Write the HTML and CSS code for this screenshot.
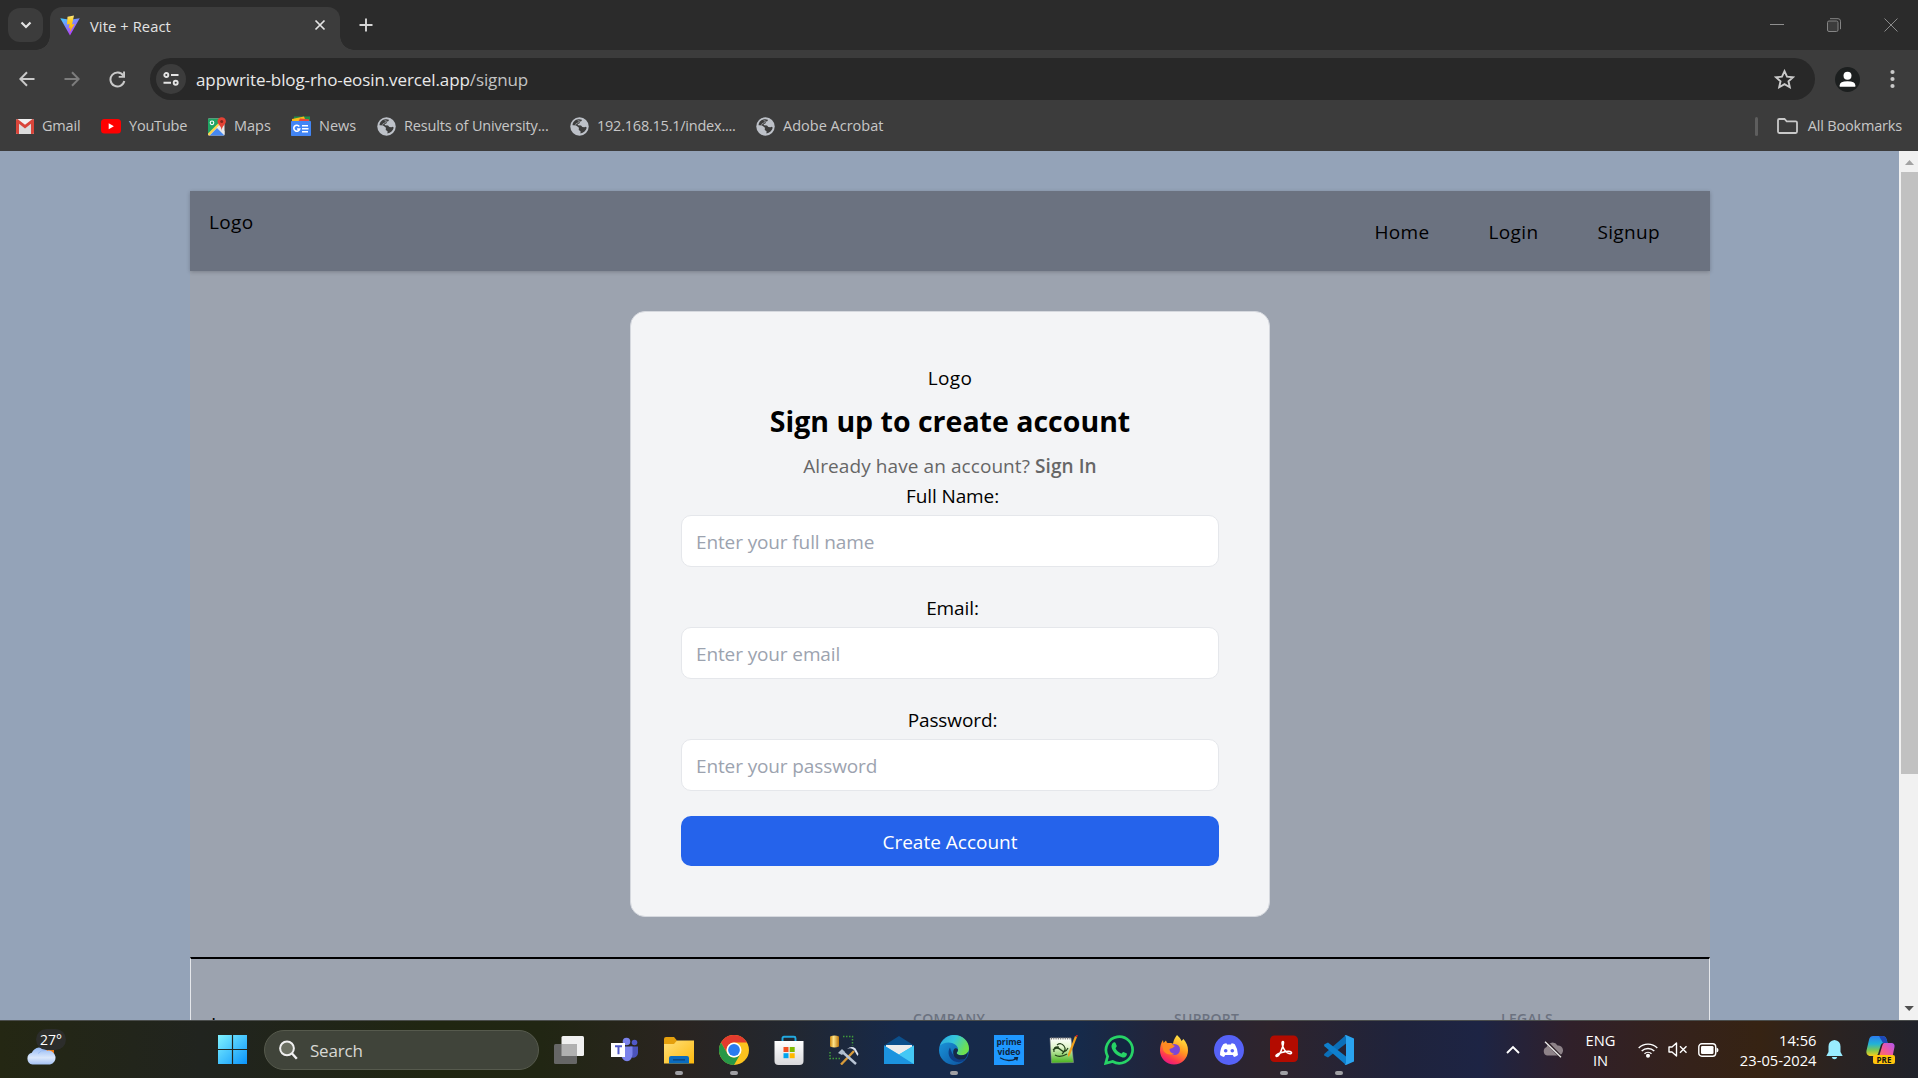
FILE: index.html
```html
<!DOCTYPE html>
<html lang="en">
<head>
<meta charset="utf-8">
<title>Vite + React</title>
<link rel="stylesheet" href="styles.css">
</head>
<body>
<svg class="defs" width="0" height="0" aria-hidden="true">
  <defs>
    <symbol id="globe" viewBox="0 0 20 20">
      <circle cx="10" cy="10" r="9.7" fill="#bdc1c8"/>
      <path d="M7.600 2.600c1.600-.5 3.400-.4 4.900.2l-.3 1.500-1.900.7-.2 1.700-2.100.9.400 1.200 3.200.2 1.400 1.400 2.100.4 1.600-.6.900 1c-.7 2.900-3.200 5.600-6.600 6.100l.1-2.300-1.900-1.300.2-2.300-2.500-2.100-4.200-.4c-.200-2.900 2-5.500 4.900-6.300z" fill="#3c3c3c"/>
      <path d="M8 3.800l2 .3-1.100 1.800-2.600 1.200-.6 2-3.700-.2" fill="none" stroke="#bdc1c8" stroke-width=".6"/>
    </symbol>
    <linearGradient id="win" x1="0" y1="0" x2="1" y2="1"><stop offset="0" stop-color="#80f4ff"/><stop offset="1" stop-color="#0a93fb"/></linearGradient>
    <linearGradient id="cloud" x1="0" y1="0" x2="0" y2="1"><stop offset="0" stop-color="#93b9f5"/><stop offset=".6" stop-color="#dbe8fb"/><stop offset="1" stop-color="#a4c1f3"/></linearGradient>
    <linearGradient id="vite" x1="0" y1="0" x2=".6" y2="1"><stop offset="0" stop-color="#41d1ff"/><stop offset="1" stop-color="#bd34fe"/></linearGradient>
    <linearGradient id="bolt" x1="0" y1="0" x2="0" y2="1"><stop offset="0" stop-color="#ffea83"/><stop offset=".3" stop-color="#ffcd20"/><stop offset="1" stop-color="#ffa800"/></linearGradient>
    <linearGradient id="folder" x1="0" y1="0" x2="1" y2="1"><stop offset="0" stop-color="#ffe07a"/><stop offset="1" stop-color="#fdb90d"/></linearGradient>
    <linearGradient id="store" x1="0" y1="0" x2="0" y2="1"><stop offset="0" stop-color="#fff"/><stop offset="1" stop-color="#d9d9dc"/></linearGradient>
    <linearGradient id="gold"><stop offset="0" stop-color="#c9850c"/><stop offset=".4" stop-color="#ffe58a"/><stop offset="1" stop-color="#b87208"/></linearGradient>
    <linearGradient id="edgeTop" x1="0" y1="0" x2="1" y2=".4"><stop offset="0" stop-color="#2aa6dd"/><stop offset=".5" stop-color="#35c6dc"/><stop offset="1" stop-color="#6ee04f"/></linearGradient>
    <linearGradient id="edgeLow" x1="0" y1="0" x2="1" y2="1"><stop offset="0" stop-color="#1b9de2"/><stop offset="1" stop-color="#0c4c98"/></linearGradient>
    <linearGradient id="fox" x1=".8" y1="0" x2=".3" y2="1"><stop offset="0" stop-color="#fff04a"/><stop offset=".45" stop-color="#ff9a1f"/><stop offset=".8" stop-color="#ff3750"/><stop offset="1" stop-color="#e31587"/></linearGradient>
    <linearGradient id="grass" x1="0" y1="0" x2="0" y2="1"><stop offset="0" stop-color="#fff"/><stop offset=".35" stop-color="#e4f6cf"/><stop offset="1" stop-color="#47b31c"/></linearGradient>
    <linearGradient id="cpA" x1="0" y1="0" x2="0" y2="1"><stop offset="0" stop-color="#2b7cf0"/><stop offset=".4" stop-color="#21b3d6"/><stop offset=".7" stop-color="#7cc653"/><stop offset="1" stop-color="#f5cf1b"/></linearGradient>
    <linearGradient id="cpB" x1="0" y1="1" x2="1" y2="0"><stop offset="0" stop-color="#ff7a45"/><stop offset=".5" stop-color="#f0589f"/><stop offset="1" stop-color="#b057f0"/></linearGradient>
  </defs>
</svg>

<header class="browser">
  <div class="tabstrip">
    <button class="tab-search" aria-label="Search tabs"><svg width="12" height="8" viewBox="0 0 12 8"><path d="M1.500 1.500L6 6l4.500-4.500" fill="none" stroke="#e3e3e3" stroke-width="2.200"/></svg></button>
    <div class="tab">
      <svg width="20" height="21" viewBox="0 0 20 21"><path d="M.3 3.200L10 20.500 19.700 3.200 10 4.800z" fill="url(#vite)"/><path d="M14 .5L7.500 1.800 7 9.600l2.600-.5-.9 4.100 1.900-.6-1 4.900 5-8.600-2.600.5z" fill="url(#bolt)"/></svg>
      <span class="tab-title">Vite + React</span>
      <svg class="tab-close" width="12" height="12" viewBox="0 0 12 12"><path d="M1.500 1.500l9 9m0-9l-9 9" stroke="#e3e3e3" stroke-width="1.700"/></svg>
    </div>
    <svg class="new-tab" width="14" height="14" viewBox="0 0 14 14"><path d="M7 .5v13M.5 7h13" stroke="#d6d6d6" stroke-width="1.900"/></svg>
    <div class="window-controls">
      <svg width="14" height="14" viewBox="0 0 14 14"><path d="M0 6.500h14" stroke="#8f8f8f"/></svg>
      <svg width="14" height="14" viewBox="0 0 14 14" fill="none" stroke="#858585"><rect x=".5" y="3" width="10.500" height="10.500" rx="1.500" fill="#3c3c3c"/><path d="M3 .7h8q2.500 0 2.500 2.500v8"/></svg>
      <svg width="14" height="14" viewBox="0 0 14 14"><path d="M.5.5l13 13m0-13l-13 13" stroke="#8a8a8a"/></svg>
    </div>
  </div>

  <div class="toolbar">
    <svg class="nav-icon" width="16" height="16" viewBox="0 0 16 16"><path d="M15.500 8H1.500M8 1.200L1.300 8 8 14.800" fill="none" stroke="#c9c9c9" stroke-width="2"/></svg>
    <svg class="nav-icon" width="16" height="16" viewBox="0 0 16 16"><path d="M.5 8h14M8 1.200L14.700 8 8 14.800" fill="none" stroke="#7c7c7c" stroke-width="2"/></svg>
    <svg class="nav-icon" width="17" height="17" viewBox="0 0 17 17"><path d="M14.300 4.600A7 7 0 1 0 15.300 10" fill="none" stroke="#c9c9c9" stroke-width="2"/><path d="M16 .5v6.300H9.700V5h4.400V.5z" fill="#c9c9c9"/></svg>
    <div class="omnibox">
      <span class="site-info"><svg width="16" height="14" viewBox="0 0 16 14" fill="none" stroke="#e3e3e3" stroke-width="1.900"><circle cx="3.300" cy="3" r="2"/><path d="M8 3h7.500M.5 10.800H8"/><circle cx="12.700" cy="10.800" r="2"/></svg></span>
      <span class="url">appwrite-blog-rho-eosin.vercel.app<span class="path">/signup</span></span>
      <svg class="star" width="21" height="20" viewBox="0 0 21 20"><path d="M10.500 2.200l2.500 5.500 6 .6-4.500 4 1.300 5.900-5.300-3.100-5.300 3.100 1.300-5.900L2 8.300l6-.6z" fill="none" stroke="#c9c9c9" stroke-width="1.900"/></svg>
    </div>
    <svg class="avatar" width="25" height="25" viewBox="0 0 25 25"><circle cx="12.500" cy="12.500" r="12.500" fill="#1c1f1f"/><circle cx="12.500" cy="8.800" r="4" fill="#fff"/><path d="M4.700 19.800v-1.600q0-4 7.800-4t7.800 4v1.600z" fill="#fff"/></svg>
    <svg class="menu" width="5" height="20" viewBox="0 0 5 20" fill="#c9c9c9"><circle cx="2.500" cy="3" r="2.100"/><circle cx="2.500" cy="10" r="2.100"/><circle cx="2.500" cy="17" r="2.100"/></svg>
  </div>

  <nav class="bookmarks">
    <a class="bm bm-gmail"><svg width="18" height="15" viewBox="0 0 18 15"><path d="M0 1.500Q0 0 1.500 0h15Q18 0 18 1.500v12Q18 15 16.500 15h-15Q0 15 0 13.500z" fill="#f1f1f1"/><path d="M3 4l6 5 6-5v11H3z" fill="#dcdcdc"/><path d="M0 1.500Q0 0 1.500 0L9 5.800 16.500 0Q18 0 18 1.500v12q0 1.500-1.500 1.500H15V4.800L9 9.600 3 4.800V15H1.500Q0 15 0 13.500z" fill="#d9453a"/></svg><span>Gmail</span></a>
    <a class="bm bm-youtube"><svg width="20" height="15" viewBox="0 0 20 15"><rect width="20" height="14.500" rx="3.500" fill="#f00"/><path d="M7.700 4.300v6l5.200-3z" fill="#fff"/></svg><span>YouTube</span></a>
    <a class="bm bm-maps"><svg width="18" height="19" viewBox="0 0 18 19"><rect y="1.500" width="16.500" height="17" rx="1" fill="#e8e8e8"/><path d="M0 2.500q0-1 1-1h10.500L10 7.500 0 17.500z" fill="#1fa463"/><path d="M1.500 18.500l7.500-7.500 7.500 7.500z" fill="#4688f1"/><path d="M0 16.500L10 6.500l1.500 1.500L1.500 18.500Q0 18.500 0 16.500z" fill="#fbd44c"/><path d="M9 10.500l2-2 5.500 5.500v4z" fill="#e8e8e8"/><circle cx="4" cy="5.800" r="1.800" fill="none" stroke="#fff" stroke-width="1.100"/><path d="M13.700.2A4.200 4.200 0 0 0 9.500 4.500c0 3 4.200 4.500 4.200 9.500 0-5 4.200-6.500 4.200-9.500A4.200 4.200 0 0 0 13.700.2z" fill="#e34234"/><circle cx="13.700" cy="4.500" r="1.500" fill="#84261d"/></svg><span>Maps</span></a>
    <a class="bm bm-news"><svg width="20" height="20" viewBox="0 0 20 20"><path d="M3 .5h16V6H3z" fill="#1e8e4a"/><path d="M1 3L13 .5 15 6H1z" fill="#f9bb16"/><path d="M9 2.500l9 .8V6H7z" fill="#e8453c"/><rect y="5" width="20" height="15" rx=".8" fill="#4285f4"/><path d="M8.300 10.500a3 3 0 1 0 .4 2.500H6" fill="none" stroke="#fff" stroke-width="1.600"/><path d="M11 9.700h6M11 12.700h6.500M11 15.700h6" stroke="#fff" stroke-width="1.500"/></svg><span>News</span></a>
    <a class="bm bm-univ"><svg width="19" height="19"><use href="#globe"/></svg><span>Results of University...</span></a>
    <a class="bm bm-router"><svg width="19" height="19"><use href="#globe"/></svg><span>192.168.15.1/index....</span></a>
    <a class="bm bm-adobe"><svg width="19" height="19"><use href="#globe"/></svg><span>Adobe Acrobat</span></a>
    <a class="bm bm-all"><svg width="21" height="16" viewBox="0 0 21 16"><path d="M1 13.500V2.300Q1 1 2.300 1H7.500l2.200 2.300h9Q20 3.300 20 4.600v8.900q0 1.500-1.300 1.500H2.300Q1 15 1 13.500z" fill="none" stroke="#c9c9c9" stroke-width="1.800"/></svg><span>All Bookmarks</span></a>
  </nav>
</header>

<div class="viewport">
  <div class="page">
    <div class="container">
      <div class="site-header">
        <span>Logo</span>
        <nav class="site-nav"><a>Home</a><a>Login</a><a>Signup</a></nav>
      </div>
      <main class="main">
        <form class="card">
          <div class="card-logo">Logo</div>
          <h2 class="card-title">Sign up to create account</h2>
          <p class="card-sub">Already have an account? <a>Sign In</a></p>
          <label>Full Name:</label>
          <div class="field">Enter your full name</div>
          <label>Email:</label>
          <div class="field">Enter your email</div>
          <label>Password:</label>
          <div class="field">Enter your password</div>
          <button type="button" class="submit">Create Account</button>
        </form>
      </main>
      <footer class="site-footer">
        <div class="foot-logo">Logo</div>
        <div>COMPANY</div>
        <div>SUPPORT</div>
        <div>LEGALS</div>
      </footer>
    </div>
  </div>
  <div class="scrollbar">
    <svg width="19" height="21" viewBox="0 0 19 21"><path d="M6 14l4.500-5 4.500 5z" fill="#a3a3a3"/></svg>
    <div class="thumb"></div>
    <svg width="19" height="23" viewBox="0 0 19 23"><path d="M5.500 9l4.700 5 4.700-5z" fill="#505050"/></svg>
  </div>
</div>

<div class="taskbar">
  <div class="weather">
    <svg width="30" height="22" viewBox="0 0 30 22"><path d="M20 4h8v5h-8z" fill="#e8720c"/><path d="M6.500 20.500A6 6 0 0 1 5.800 8.800 9 9 0 0 1 21 6.800a6.900 6.900 0 0 1 3 13.700z" fill="url(#cloud)"/><path d="M12 9.500q3-4 8-3" fill="none" stroke="#9bbcf3" stroke-width="1"/></svg>
    <span class="temp">27°</span>
  </div>
  <svg class="start" width="29" height="29" viewBox="0 0 29 29"><path d="M0 0h13.900v13.900H0zM15.100 0H29v13.900H15.100zM0 15.100h13.900V29H0zM15.100 15.100H29V29H15.100z" fill="url(#win)"/></svg>
  <div class="search"><svg width="19" height="20" viewBox="0 0 19 20"><circle cx="8" cy="8.300" r="6.900" fill="#6b6f62" stroke="#f0f0f0" stroke-width="2"/><path d="M12.800 13.300l5 5.400" stroke="#f0f0f0" stroke-width="2.400"/></svg><span>Search</span></div>

  <div class="apps">
    <span><svg width="30" height="30" viewBox="0 0 30 30"><rect x="7.500" y="1" width="22.500" height="20" rx="1.500" fill="#f0f0f0"/><rect y="9" width="23" height="20" rx="1.500" fill="#666"/><path d="M7.500 9H23v12H7.500z" fill="#b0b0b0"/></svg></span>
    <span><svg width="30" height="30" viewBox="0 0 30 30"><circle cx="25.500" cy="7.500" r="2.800" fill="#5059c9"/><path d="M21 11.500h8v6.500a4.800 4.800 0 0 1-6 4.500z" fill="#4b53bc"/><circle cx="17.500" cy="6.500" r="3.800" fill="#7b83eb"/><path d="M12 11.500h11.500v8q-.6 6.500-5.500 6.700-5-.2-6-6.700z" fill="#7b83eb"/><rect x="2" y="8" width="14" height="14" fill="#fff"/><path d="M6 11.200h7M9.500 11.200v8" stroke="#5059c9" stroke-width="2"/></svg></span>
    <span class="open"><svg width="30" height="30" viewBox="0 0 30 30"><path d="M0 4q0-2 2-2h8l3 3.500h0v5H0z" fill="#e5a00d"/><path d="M0 9h10l3-3.500h17V28.500H0z" fill="url(#folder)"/><path d="M5 28.500V23q0-2 2-2h16q2 0 2 2v5.500z" fill="#0a6cc0"/><path d="M9 24.800h12" stroke="#0b4a86" stroke-width="1.600"/></svg></span>
    <span class="open"><svg width="30" height="30" viewBox="0 0 30 30"><circle cx="15" cy="15" r="15" fill="#fcc31e"/><path d="M2 7.500A15 15 0 0 1 28 7.500H15A7.500 7.500 0 0 0 8.500 18.700z" fill="#e33b2e"/><path d="M2 7.500A15 15 0 0 0 15 30L21.500 18.800A7.500 7.500 0 0 1 8.500 18.800z" fill="#279847"/><circle cx="15" cy="15" r="7.500" fill="#fff"/><circle cx="15" cy="15" r="5.900" fill="#2a7bf0"/></svg></span>
    <span><svg width="30" height="30" viewBox="0 0 30 30"><path d="M8.500 6V3.200Q8.500 1.800 10 1.800h10q1.500 0 1.500 1.400V6" fill="none" stroke="#22a9e0" stroke-width="1.900"/><path d="M.5 6h29v20q0 4-4 4H4.500q-4 0-4-4z" fill="url(#store)"/><path d="M9.500 12h5v5h-5z" fill="#f25022"/><path d="M15.700 12h5v5h-5z" fill="#7fba00"/><path d="M9.500 18.200h5v5h-5z" fill="#00a4ef"/><path d="M15.700 18.200h5v5h-5z" fill="#ffb900"/></svg></span>
    <span><svg width="30" height="30" viewBox="0 0 30 30"><path d="M1 1.500q4.500-2 9 0v10q-4.500 2-9 0z" fill="url(#gold)"/><path d="M14 1.500h9.500v9M1 17v6.500h10" fill="none" stroke="#3f9a3a" stroke-width="1.500" stroke-dasharray="1.500 1.500"/><path d="M12 29.500L25 16" stroke="#d79a3a" stroke-width="2.400"/><path d="M13 16.500l14 12.500" stroke="#b8c4d4" stroke-width="2.500"/><path d="M18 14q4-2 7 1l3.500 6 1-2-3-5.500q-4-3-8.500.5z" fill="#dbe3ee"/><path d="M9 18l4-4 3 3-3 3z" fill="#aebccd"/></svg></span>
    <span><svg width="30" height="30" viewBox="0 0 30 30"><path d="M0 10.500L15 1l15 9.500v6H0z" fill="#0b4f8c"/><path d="M2 10h26v12H2z" fill="#ececec"/><path d="M0 10.500l15 9 15-9V29H0z" fill="#34b8ee"/><path d="M0 29V10.500L30 29z" fill="#1c93df"/><path d="M15 19.500L30 10.500V29z" fill="#44c8f5"/></svg></span>
    <span class="open"><svg width="30" height="30" viewBox="0 0 30 30"><circle cx="15" cy="15" r="15" fill="url(#edgeLow)"/><path d="M1 10.500C4 2.500 11 0 15 0c8.500 0 15 6 15 13.500 0 4-3.200 6.700-7.300 6.700-3.700 0-5-1.300-5-2.200 0-.8 1.300-1.300 1.300-3.600C19 10.500 14.500 7.500 9.500 7.500 5.500 7.500 2.500 9 1 10.500z" fill="url(#edgeTop)"/><path d="M11 12.500c-3 4.500-1.500 13 7 14.500 3.500.6 7-1 8.500-2.800-6 1.200-13-1.200-15.500-11.700z" fill="#0f3f86"/><path d="M19 14.400c0 2.300-1.300 2.800-1.300 3.600 0 .9 1.300 2.200 5 2.200 3 0 5.400-1.400 6.500-3.700q-.6 4.500-3 7.200c-4.500 2.200-12.500.5-12-7 .2-2.800 2.300-5 4.800-2.300z" fill="#162a48"/></svg></span>
    <span><span class="prime"><span>prime</span><span>video</span><svg width="20" height="5" viewBox="0 0 20 5"><path d="M1 .8q8 5 16.500.8M15 .8l3.500-.3-.8 3" fill="none" stroke="#10243c" stroke-width="1.300"/></svg></span></span>
    <span><svg width="30" height="30" viewBox="0 0 30 30"><path d="M1 3h21l2.500 24.500L2.500 28z" fill="url(#grass)" stroke="#999" stroke-width=".5"/><path d="M2 3.500h20" stroke="#777" stroke-width="2" stroke-dasharray="1 1.300"/><path d="M4 15q4-4 8 0t7-2M6 20q5 3 12-1M8 10q4-3 7 1t-2 8M5 17q-1-6 5-5" fill="none" stroke="#24401a" stroke-width="1.200"/><path d="M26 1l2 1-7 18-2 2v-3z" fill="#f0a01c"/><path d="M27 .5l1.500.8" stroke="#c22" stroke-width="2"/></svg></span>
    <span><svg width="30" height="30" viewBox="0 0 30 30"><path d="M1.700 28.300l1.900-7A13.300 13.300 0 1 1 8.700 26.500z" fill="#132541" stroke="#27d366" stroke-width="2.700"/><path d="M10.300 7.300c.7 0 1 .1 1.400 1l1.100 2.700c.2.700-1.500 2-1.200 2.600 1.300 2.400 3 3.900 5.500 5 .8.200 1.600-1.900 2.300-1.700l3 1.400c.7.400.6.800.4 1.600-.5 1.900-2.500 2.700-4.200 2.500-5-.7-10.300-5.600-11.100-10.300-.2-2 .8-4.500 2.800-4.800z" fill="#27d366"/></svg></span>
    <span><svg width="30" height="30" viewBox="0 0 30 30"><path d="M18 0c2 2 3.500 3.500 4.500 6l2-2c3 3.500 4.500 7 4.500 11.500A14 14 0 0 1 1 15.500C1 11 2 8 4 5l.5 3L7 5.500l1 2.500c2.500 0 4.500 0 6 .8C14.500 5 16 2.500 18 0z" fill="url(#fox)"/><circle cx="15.500" cy="14.500" r="5.500" fill="#7b46d8"/><path d="M3 9q4-2 8-.5l5 2.500q-3 3-5.500 3 0 4 5 5-7 2-11-3z" fill="#ff8a22"/></svg></span>
    <span><svg width="30" height="30" viewBox="0 0 30 30"><circle cx="15" cy="15" r="15" fill="#5662f6"/><path d="M9.200 9.300Q11 8.500 12.400 8.300l.7 1.200h3.800l.7-1.200q1.400.2 3.200 1 3.200 5 3.200 10.700-1.800 1.400-4 1.900l-1.200-2h-7.600l-1.200 2q-2.200-.5-4-1.900 0-6 3.200-10.700z" fill="#fff"/><circle cx="11.700" cy="15.800" r="1.800" fill="#5662f6"/><circle cx="18.300" cy="15.800" r="1.800" fill="#5662f6"/></svg></span>
    <span class="open"><svg width="30" height="30" viewBox="0 0 30 30"><rect x="1" y=".5" width="28" height="26.500" rx="4.500" fill="#b30b00"/><path d="M14 6.500c-1.800 0-.6 4.500.7 7 2 3.700 4 5.200 6.200 5.200 2.500 0 2-2.200-1-2.300-4-.2-11 2-12.500 3.600-1.300 1.500.8 2.400 2.700-.5C12.500 16 15.800 6.500 14 6.500z" fill="none" stroke="#fff" stroke-width="1.600"/></svg></span>
    <span class="open"><svg width="30" height="30" viewBox="0 0 30 30"><path d="M22 0v8.500L4 22.500.5 20.800q-.8-1 0-2z" fill="#0b6fb8"/><path d="M22 30v-8.500L4 7.500.5 9.200q-.8 1 0 2z" fill="#0f7fcc"/><path d="M22 0l8 3.500v23L22 30l-1.500-.6q1.500-.1 1.500-2V2.800q0-1.800-1.500-2z" fill="#2aa3ef"/></svg></span>
  </div>

  <div class="tray">
    <svg class="tray-chevron" width="14" height="9" viewBox="0 0 14 9"><path d="M1 8l6-6 6 6" fill="none" stroke="#fff" stroke-width="1.900"/></svg>
    <svg class="tray-cloud" width="21" height="17" viewBox="0 0 21 17"><path d="M5 14.500A4.500 4.500 0 0 1 4.600 6 6 6 0 0 1 15.500 4.500a5 5 0 0 1 1 10z" fill="#8d8288"/><path d="M4 .5l15 15.500" stroke="#2d2027" stroke-width="3"/><path d="M3 .8l16 15.500" stroke="#eee" stroke-width="1.300"/></svg>
    <div class="lang"><span>ENG</span><span>IN</span></div>
    <svg class="tray-wifi" width="20" height="16" viewBox="0 0 20 16" fill="none" stroke="#fff" stroke-width="1.400"><path d="M.7 6a13.200 13.200 0 0 1 18.600 0M3.700 9a9 9 0 0 1 12.600 0M6.500 11.800a5 5 0 0 1 7 0"/><circle cx="10" cy="13.700" r="1.300" fill="#fff"/></svg>
    <svg class="tray-vol" width="20" height="15" viewBox="0 0 20 15" fill="none" stroke="#fff" stroke-width="1.400"><path d="M1 5h3L8.500 1v13L4 10H1z" stroke-linejoin="round"/><path d="M12 4.300l6.500 6.500m0-6.500L12 10.800"/></svg>
    <svg class="tray-bat" width="21" height="14" viewBox="0 0 21 14"><rect x=".8" y=".8" width="16.900" height="12.400" rx="3" fill="none" stroke="#fff" stroke-width="1.400"/><rect x="3" y="3" width="12.500" height="8" rx="1.300" fill="#fff"/><path d="M18.500 4.500q2 .5 2 2.500t-2 2.500z" fill="#fff"/></svg>
    <div class="clock"><span>14:56</span><span>23-05-2024</span></div>
    <svg class="tray-bell" width="17" height="20" viewBox="0 0 17 20"><path d="M8.500 0q6 .6 6 6.500v5.500l2.200 4H.3l2.200-4V6.500Q2.500.6 8.500 0zM5.800 17h5.400q-.5 2.200-2.700 2.200T5.800 17z" fill="#99ecff"/></svg>
    <div class="copilot"><svg width="29" height="24" viewBox="0 0 29 24"><path d="M7 0h9.500q3 0 4 3l1 4h-4q-2 0-2.700 2.200L12 18q-.8 2-3 2H3.500Q0 19 .4 15L3.200 3Q4.200 0 7 0z" fill="url(#cpA)"/><path d="M13 0h4q2.500.4 3.500 3l1.200 4H17z" fill="#1e49b8"/><path d="M18 7h7.500q3.500.3 3 4l-2.500 12H15.500q-3.500 0-2.500-2.500L16.500 9q.5-1.500 1.500-2z" fill="url(#cpB)"/></svg><span class="pre">PRE</span></div>
  </div>
</div>
</body>
</html>
```
FILE: styles.css
```css
* { box-sizing: border-box; }

body {
  margin: 0;
  width: 1918px;
  height: 1078px;
  overflow: hidden;
  display: flex;
  flex-direction: column;
  font-family: "Open Sans", "Noto Sans", sans-serif;
  font-size: 19px;
  line-height: 30px;
  color: #000;
}

svg { display: block; flex: none; }
button { border: 0; padding: 0; font: inherit; }
span { white-space: nowrap; }
.defs { position: absolute; }

/* Browser chrome */
.browser { height: 151px; background: #3c3c3c; flex: none; }

.tabstrip {
  height: 50px;
  display: flex;
  align-items: center;
  background: #2b2b2b;
  padding-left: 8px;
}
.tab-search {
  width: 35px;
  height: 34px;
  border-radius: 12px;
  background: #3c3c3c;
  display: grid;
  place-items: center;
}
.tab {
  position: relative;
  width: 290px;
  height: 43px;
  margin: 7px 0 0 7px;
  padding: 0 14px 7px 10px;
  border-radius: 12px 12px 0 0;
  background: #3c3c3c;
  display: flex;
  align-items: center;
}
.tab::before, .tab::after {
  content: "";
  position: absolute;
  bottom: 0;
  width: 14px;
  height: 14px;
}
.tab::before { left: -14px; background: radial-gradient(circle at 0 0, transparent 13.500px, #3c3c3c 14px); }
.tab::after { right: -14px; background: radial-gradient(circle at 100% 0, transparent 13.500px, #3c3c3c 14px); }
.tab-title { margin-left: 10px; padding-top: 2px; font-size: 14.700px; letter-spacing: .1px; color: #e3e3e3; }
.tab-close { margin-left: auto; }
.new-tab { margin-left: 19px; }
.window-controls { margin-left: auto; display: flex; gap: 43px; padding-right: 20px; }

.toolbar { height: 58px; display: flex; align-items: center; padding: 0 23px 0 19px; }
.nav-icon { margin-right: 29px; }
.nav-icon + .nav-icon + .nav-icon { margin-right: 24px; }
.omnibox {
  flex: 1;
  height: 42px;
  border-radius: 21px;
  background: #282828;
  display: flex;
  align-items: center;
  padding: 0 20px 0 6px;
}
.site-info { width: 30px; height: 30px; border-radius: 50%; background: #3c3c3c; display: grid; place-items: center; }
.url { margin-left: 10px; padding-top: 2px; font-size: 17px; letter-spacing: -.1px; color: #e9e9e9; }
.url .path { color: #c3c3c3; }
.star { margin-left: auto; }
.avatar { margin: 0 30px 0 20px; }

.bookmarks { height: 36px; display: flex; align-items: center; padding: 0 16px; font-size: 14.500px; color: #c7c7c7; }
.bm { display: flex; align-items: center; gap: 8px; }
.bm-gmail { width: 85px; letter-spacing: -.2px; }
.bm-youtube { width: 107px; letter-spacing: -.2px; }
.bm-maps { width: 83px; }
.bm-news { width: 86px; }
.bm-univ { width: 193px; letter-spacing: -.17px; }
.bm-router { width: 186px; letter-spacing: -.23px; }
.bm-all { margin-left: auto; gap: 10px; letter-spacing: -.18px; }
.bm-all::before { content: ""; width: 3px; height: 19px; margin-right: 9px; background: #5e5e5e; border-radius: 2px; }

/* Web page */
.viewport { height: 869px; display: flex; flex: none; overflow: hidden; }
.page { width: 1899px; background: #94a3b8; padding: 40px 189px 0 190px; overflow: hidden; }
.container { background: #9ca3af; }
.site-header {
  height: 80px;
  padding: 20px 20px 20px 19px;
  display: flex;
  justify-content: space-between;
  align-items: flex-start;
  line-height: 22px;
  letter-spacing: .35px;
  background: #6b7280;
  box-shadow: 0 1px 4px rgba(0, 0, 0, .22);
}
.site-nav { display: flex; gap: 59px; padding: 10px 30px 0 0; }
.main { padding: 40px; display: flex; justify-content: center; }
.card {
  width: 640px;
  height: 606px;
  padding: 50px;
  border: 1px solid #d5d8de;
  border-radius: 15px;
  background: #f3f4f6;
  text-align: center;
  display: flex;
  flex-direction: column;
}
.card > * { flex: none; }
.card-logo { height: 35px; line-height: 32px; letter-spacing: .35px; }
.card-title { margin: 0; height: 52px; line-height: 48px; font-size: 28.500px; font-weight: 700; }
.card-sub { margin: 0; height: 31px; line-height: 34px; letter-spacing: .08px; color: #666; }
.card-sub a { font-weight: 600; }
label { height: 35px; line-height: 33px; padding-left: 5px; letter-spacing: -.1px; }
.field {
  height: 52px;
  margin-bottom: 25px;
  padding: 0 15px 0 14px;
  border: 1px solid #e5e7eb;
  border-radius: 10px;
  background: #fff;
  color: #9ca3af;
  text-align: left;
  line-height: 52px;
  letter-spacing: -.12px;
}
.submit { height: 50px; border-radius: 10px; background: #2563eb; color: #fff; line-height: 52px; }
.site-footer {
  height: 300px;
  padding: 45px 20px;
  border: 1px solid #e5e7eb;
  border-top: 2px solid #000;
  display: grid;
  grid-template-columns: 702px 261px 327px 1fr;
  color: #6b7280;
  font-size: 14px;
  font-weight: 600;
  letter-spacing: .3px;
}
.foot-logo { color: #000; font-size: 19px; font-weight: 400; padding-top: 5px; }

.scrollbar { width: 19px; background: #f1f1f1; display: flex; flex-direction: column; }
.thumb { height: 602px; margin: 0 0 auto 2px; background: #c1c1c1; }

/* Taskbar */
.taskbar {
  height: 58px;
  flex: none;
  display: flex;
  align-items: center;
  border-top: 1px solid #4a4d4c;
  background: linear-gradient(90deg, #242713 0, #21241f 200px, #202611 440px, #212613 540px, #2a2420 680px, #222730 790px, #16294a 900px, #162a4a 1080px, #242438 1170px, #2e242c 1270px, #1f233c 1400px, #1d2444 1480px, #30202a 1570px, #35221a 1690px, #362313 1760px, #2a2322 1840px, #20222a 1918px);
  color: #fff;
}
.weather { position: relative; width: 218px; padding: 11px 0 0 26px; }
.temp {
  position: absolute;
  left: 36px;
  top: -4px;
  width: 30px;
  height: 21px;
  border-radius: 11px;
  background: #2c2d2b;
  font-size: 14px;
  line-height: 21px;
  text-align: center;
}
.search {
  width: 275px;
  height: 40px;
  margin-left: 17px;
  padding-left: 14px;
  border: 1px solid #565a4d;
  border-radius: 20px;
  background: #40443a;
  display: flex;
  align-items: center;
  gap: 12px;
  font-size: 17px;
  letter-spacing: -.2px;
  color: #d8d8d4;
}
.search span { padding-top: 2px; }
.apps { display: flex; margin-left: 2.500px; }
.apps > span { position: relative; width: 55px; height: 58px; display: grid; place-items: center; }
.apps > .open::after {
  content: "";
  position: absolute;
  left: 23px;
  bottom: 4px;
  width: 8px;
  height: 4px;
  border-radius: 2px;
  background: #a0a0a4;
}
.prime {
  width: 30px;
  height: 30px;
  padding-top: 2px;
  display: flex;
  flex-direction: column;
  align-items: center;
  background: #1f98ff;
  color: #10243c;
  font-size: 8.500px;
  font-weight: 700;
  line-height: 10px;
}

.tray { flex: 1; display: flex; align-items: center; padding-right: 23px; }
.tray-chevron { margin-left: 139px; }
.tray-cloud { margin-left: 22px; }
.lang, .clock { font-size: 14.700px; line-height: 20px; display: flex; flex-direction: column; }
.lang { align-items: center; width: 40px; margin-left: 18px; }
.tray-wifi { margin-left: 17px; }
.tray-vol { margin-left: 10px; }
.tray-bat { margin-left: 10px; }
.clock { align-items: flex-end; width: 90px; margin-left: 8px; }
.tray-bell { margin-left: auto; }
.copilot { position: relative; margin-left: 23px; padding-bottom: 4px; }
.pre {
  position: absolute;
  left: 7px;
  bottom: 0;
  width: 22px;
  height: 9px;
  border-radius: 2px;
  background: #ffc40c;
  color: #111;
  font-size: 8px;
  font-weight: 700;
  line-height: 9px;
  text-align: center;
}
```
